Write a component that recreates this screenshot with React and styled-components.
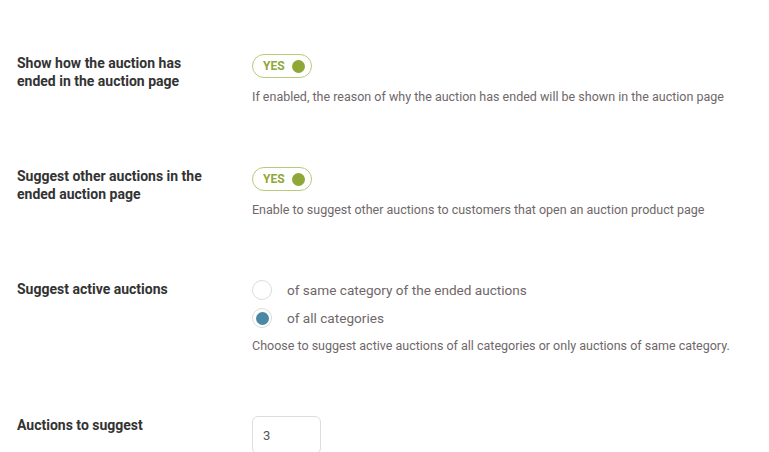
import React, { useState } from 'react';
import styled, { createGlobalStyle } from 'styled-components';

const GlobalStyle = createGlobalStyle`
  html, body {
    margin: 0;
    padding: 0;
    background: #ffffff;
    font-family: Roboto, "Liberation Sans", Arial, sans-serif;
  }
`;

const Page = styled.div`
  width: 769px;
  height: 452px;
  overflow: hidden;
  box-sizing: border-box;
  padding: 53px 0 0 17px;
  display: flex;
  flex-direction: column;
  gap: 60px;
`;

const Row = styled.div`
  display: grid;
  grid-template-columns: 200px 1fr;
  column-gap: 35px;
  align-items: start;
`;

const Label = styled.div`
  padding-top: 1px;
  font-size: 14px;
  font-weight: 700;
  line-height: 18px;
  color: #333333;
`;

const Field = styled.div`
  display: flex;
  flex-direction: column;
  align-items: flex-start;
`;

const Toggle = styled.button`
  width: 60px;
  height: 24px;
  box-sizing: border-box;
  margin-top: 1px;
  padding: 0 6px 0 10px;
  display: flex;
  align-items: center;
  justify-content: space-between;
  border: 1.5px solid #b6cb78;
  border-radius: 12px;
  background: #ffffff;
  cursor: pointer;
  font-family: inherit;
  font-size: 12px;
  font-weight: 700;
  color: #8ea736;
`;

const Knob = styled.span`
  width: 13px;
  height: 13px;
  border-radius: 50%;
  background: #8ea736;
`;

const Description = styled.div`
  margin-top: ${(p) => p.$gap || 10}px;
  font-size: 12.5px;
  line-height: 18px;
  color: #6f6769;
`;

const RadioList = styled.div`
  display: flex;
  flex-direction: column;
  gap: 8px;
  margin-top: 1px;
`;

const RadioRow = styled.label`
  display: flex;
  align-items: center;
  gap: 15px;
  font-size: 13.6px;
  color: #6f6769;
  cursor: pointer;
`;

const RadioCircle = styled.span`
  width: 20px;
  height: 20px;
  box-sizing: border-box;
  border-radius: 50%;
  border: 1px solid #dcdcdc;
  display: flex;
  align-items: center;
  justify-content: center;
  background: #ffffff;

  &::after {
    content: '';
    width: 13px;
    height: 13px;
    border-radius: 50%;
    background: ${(p) => (p.$checked ? '#4a88a4' : 'transparent')};
  }
`;

const NumberInput = styled.input`
  width: 69px;
  height: 38px;
  box-sizing: border-box;
  margin-top: 1px;
  padding: 0 10px;
  border: 1px solid #dddddd;
  border-radius: 6px;
  font-family: inherit;
  font-size: 13px;
  color: #555555;
  outline: none;
`;

const App = () => {
  const [showEnd, setShowEnd] = useState(true);
  const [suggestOther, setSuggestOther] = useState(true);
  const [scope, setScope] = useState('all');
  const [count, setCount] = useState('3');

  return (
    <>
      <GlobalStyle />
      <Page>
        <Row>
          <Label>Show how the auction has ended in the auction page</Label>
          <Field>
            <Toggle onClick={() => setShowEnd(!showEnd)}>
              {showEnd ? 'YES' : 'NO'}
              <Knob />
            </Toggle>
            <Description>
              If enabled, the reason of why the auction has ended will be shown in the auction page
            </Description>
          </Field>
        </Row>

        <Row>
          <Label>Suggest other auctions in the ended auction page</Label>
          <Field>
            <Toggle onClick={() => setSuggestOther(!suggestOther)}>
              {suggestOther ? 'YES' : 'NO'}
              <Knob />
            </Toggle>
            <Description>
              Enable to suggest other auctions to customers that open an auction product page
            </Description>
          </Field>
        </Row>

        <Row>
          <Label>Suggest active auctions</Label>
          <Field>
            <RadioList>
              <RadioRow onClick={() => setScope('same')}>
                <RadioCircle $checked={scope === 'same'} />
                of same category of the ended auctions
              </RadioRow>
              <RadioRow onClick={() => setScope('all')}>
                <RadioCircle $checked={scope === 'all'} />
                of all categories
              </RadioRow>
            </RadioList>
            <Description $gap={9}>
              Choose to suggest active auctions of all categories or only auctions of same category.
            </Description>
          </Field>
        </Row>

        <Row>
          <Label>Auctions to suggest</Label>
          <Field>
            <NumberInput
              type="text"
              value={count}
              onChange={(e) => setCount(e.target.value)}
            />
          </Field>
        </Row>
      </Page>
    </>
  );
};

export default App;
